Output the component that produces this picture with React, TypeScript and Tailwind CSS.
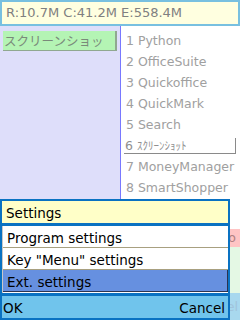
const items = ['1 Python', '2 OfficeSuite', '3 Quickoffice', '4 QuickMark', '5 Search', '6 ｽｸﾘｰﾝｼｮｯﾄ', '7 MoneyManager', '8 SmartShopper']

const menu = ['Program settings', 'Key "Menu" settings', 'Ext. settings']

const App = () => {
  return (
    <div className="relative w-[240px] h-[320px] overflow-hidden flex flex-col bg-white font-['DejaVu_Sans','Noto_Sans_CJK_JP',sans-serif] text-[13px]">
      {/* memory bar */}
      <div className="h-[26px] bg-[#78c0e0] px-[2px] pt-[2px] pb-[2px]">
        <div className="h-[22px] bg-[#ffffe0] text-[#808080] text-[13px] leading-[22px] pl-[4px]">R:10.7M C:41.2M E:558.4M</div>
      </div>

      <div className="flex flex-1">
        <div className="w-[121px] bg-[#dedefa] border-r border-[#7878ff] pt-[5px] pl-[3px]">
          <div className="w-[114px] h-[20px] overflow-hidden whitespace-nowrap bg-[#b4f4b4] border-r-2 border-b border-[#90a890] text-[#7a8a7a] text-[12.5px] leading-[19px] pl-[1px] font-['Noto_Sans_CJK_JP',sans-serif]">
            スクリーンショッ
          </div>
        </div>
        <div className="flex-1 flex flex-col pt-[4px] text-[#a0a0a0] text-[12.5px]">
          {items.map((item, i) =>
            i === 5 ? (
              <div key={item} className="h-[21px] pl-[3px] pr-[4px] pt-[3px]">
                <div className="h-[16px] border-r border-b border-[#8a8a8a] leading-[14px] pl-[1px] text-[11px] text-[#909090]">
                  <span className="text-[12.5px]">6 </span>
                  <span className="font-['Noto_Sans_CJK_JP',sans-serif]">ｽｸﾘｰﾝｼｮｯﾄ</span>
                </div>
              </div>
            ) : (
              <div key={item} className="h-[21px] leading-[21px] pl-[5px] whitespace-nowrap">
                {item}
              </div>
            ),
          )}
          <div className="mt-[31px] flex justify-end">
            <div className="h-[18px] pl-[2px] pr-[4px] bg-[#ffc4c4] text-[#b08080] leading-[18px]">Mo</div>
          </div>
          <div className="flex-1 bg-[#e4f8e4] ml-[10px]" />
        </div>
      </div>

      {/* softkeys behind dialog */}
      <div className="h-[27px] bg-[#a8d8ee] flex justify-end items-center pr-[2px] text-[#a0c4dc]">Cancel</div>

      {/* settings dialog */}
      <div className="absolute left-0 bottom-0 w-[230px] h-[121px] bg-[#0a72c2] p-[2px] flex flex-col text-[13.5px]">
        <div className="h-[22px] bg-[#ffffc8] text-black leading-[20px] pt-[2px] pl-[4px]">Settings</div>
        <div className="mt-[3px] h-[67px] bg-white flex flex-col text-black border-l border-[#c8c8c8]">
          {menu.map((m, i) =>
            i === 2 ? (
              <div key={m} className="h-[22px] bg-[#6690e0] border-r border-b border-[#2c3450] leading-[20px] pt-[2px] pl-[4px]">
                {m}
              </div>
            ) : (
              <div key={m} className="h-[22px] border-b border-[#a8a080] leading-[20px] pt-[2px] pl-[4px]">
                {m}
              </div>
            ),
          )}
        </div>
        <div className="mt-[3px] h-[22px] bg-[#70c4ec] flex justify-between items-center text-black pt-[3px] pl-[1px] pr-[3px]">
          <span>OK</span>
          <span>Cancel</span>
        </div>
      </div>
    </div>
  )
}

export default App
